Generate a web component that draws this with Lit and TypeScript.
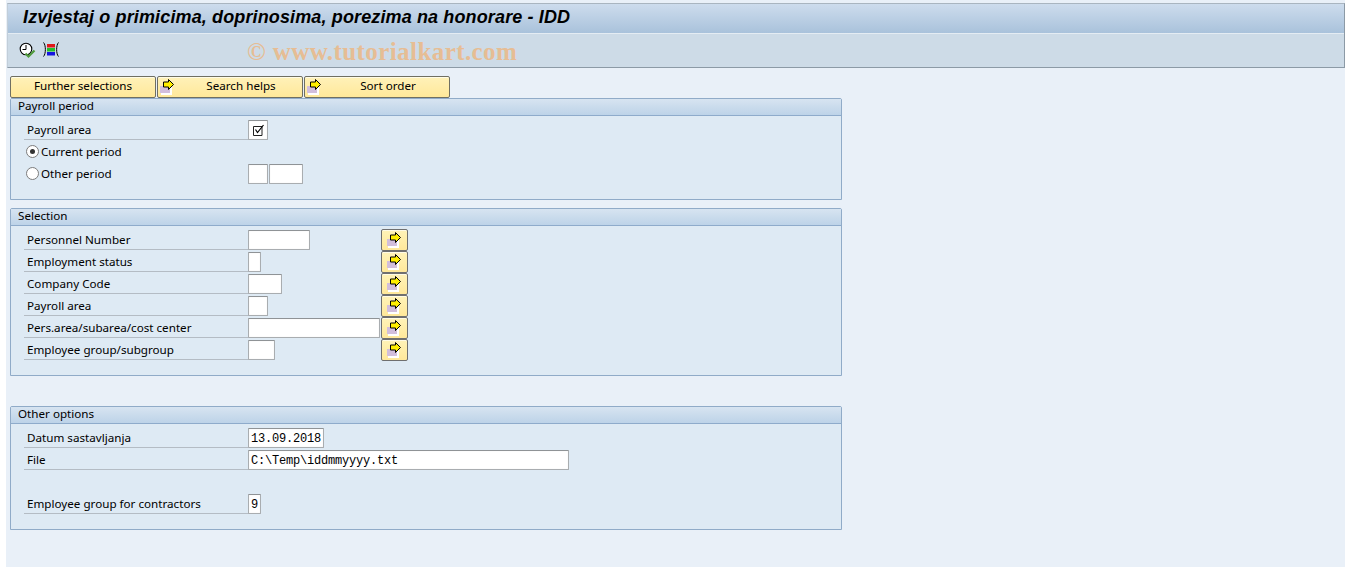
import { LitElement, html, css, svg } from "lit";
import { customElement } from "lit/decorators.js";

const arrowIcon = svg`<svg class="ai" width="18" height="18" viewBox="0 0 18 18">
  <rect x="3" y="8" width="11" height="8" fill="#fff"/>
  <rect x="2" y="7" width="10" height="7" fill="#d2bedc"/>
  <path d="M5.5 3H10.5V0.5L15.5 5.5L10.5 10.5V8H5.5Z" fill="#ffee00" stroke="#000" stroke-width="1"/>
</svg>`;

interface Row { label?: string; w?: number; val?: string; sel?: boolean; }

@customElement("app-root")
export class AppRoot extends LitElement {
  static styles = css`
    :host { display: block; width: 1355px; height: 567px; background: #fff; overflow: hidden;
      font-family: "Noto Sans", "Liberation Sans", Arial, sans-serif; font-size: 11.65px; color: #000; }
    .page { margin: 0 10px 0 6px; height: 567px; background: #e9f0f8; padding-top: 3px; box-sizing: border-box; }
    .head { margin-left: 1px; height: 65px; box-sizing: border-box; border: 1px solid #8c9aa6; border-top-color: #a9b5c0; border-left-color: #c2ced9; display: flex; flex-direction: column; }
    .title { height: 30px; box-sizing: border-box; border-bottom: 1px solid #e4ecf3; background: linear-gradient(#cddced, #a9c2db); padding: 3px 0 0 15px;
      font: italic bold 18px "Liberation Sans", Arial, sans-serif; line-height: 20px; white-space: nowrap; letter-spacing: .13px; }
    .tools { flex: 1; background: #cddbe7; display: flex; align-items: center; padding-left: 11px; gap: 7px; position: relative; padding-bottom: 1px; }
    .wm { position: absolute; left: 239px; top: 4px; font: bold 25px "Liberation Serif", serif; line-height: 28px; color: #e6bd94; white-space: nowrap; letter-spacing: .42px; }
    .tabs { display: flex; gap: 1px; margin: 8px 0 0 4px; }
    .btn { box-sizing: border-box; width: 146px; height: 22px; border: 1px solid #6f6f62; border-radius: 2px; background: linear-gradient(#fff3b8 0, #fff0b4 15%, #ffe89a 100%);
      box-shadow: inset 0 1px 0 #fffbe6; position: relative; text-align: center; line-height: 18px; }
    .btn.ic { padding-left: 22px; }
    .btn .ai { position: absolute; left: 0; top: 2px; }
    .sec { margin-left: 4px; width: 832px; box-sizing: border-box; border: 1px solid #90abc8; background: #deeaf4; border-radius: 2px 2px 0 0; }
    .sec + .sec { margin-top: 8px; }
    .sec.far { margin-top: 30px; }
    .sh { height: 17px; box-sizing: border-box; background: linear-gradient(#d7e4f1, #bdd3e8); border-bottom: 1px solid #8eabcb; padding-left: 7px; line-height: 14px; }
    .rows { display: flex; flex-direction: column; padding: 4px 0 0 13px; }
    .row { height: 22px; display: flex; align-items: flex-start; position: relative; }
    .lab { width: 224px; height: 20px; box-sizing: border-box; border-bottom: 1px solid #b4bcc4; padding: 1px 0 0 3px; line-height: 17px; white-space: nowrap; flex: none; }
    .plain { display: flex; align-items: flex-start; height: 20px; padding-left: 2px; gap: 2px; width: 224px; box-sizing: border-box; flex: none; }
    .plain span { line-height: 17px; padding-top: 1px; }
    .radio { width: 13px; height: 13px; box-sizing: border-box; border: 1px solid #7c7c7c; border-radius: 50%; background: #fff; display: flex; align-items: center; justify-content: center; margin-top: 3px; }
    .radio i { width: 5px; height: 5px; background: #333; border-radius: 50%; display: block; }
    .inp { box-sizing: border-box; height: 20px; border: 1px solid #a9adb0; border-top-color: #8f9396; background: #fff; box-shadow: inset 0 0 1px #ddd; flex: none; border-radius: 1px;
      font: 12px "Liberation Mono", monospace; letter-spacing: -.2px; line-height: 20px; padding-left: 2px; white-space: nowrap; overflow: hidden; }
    .gap { width: 1px; flex: none; }
    .chk { display: flex; align-items: center; justify-content: center; padding: 0; }
    .pick { position: absolute; left: 357px; top: -1px; box-sizing: border-box; width: 27px; height: 22px; border: 1px solid #6f6f6f; border-radius: 2px; background: linear-gradient(#fff3b8, #ffe89a); box-shadow: inset 0 1px 0 #fffbe6; }
    .pick .ai { position: absolute; left: 3px; top: 2px; }
  `;

  private sect(title: string, h: number, body: unknown, cls = "") {
    return html`<div class="sec ${cls}" style="height:${h}px"><div class="sh">${title}</div><div class="rows">${body}</div></div>`;
  }

  private input(r: Row) {
    return html`<div class="inp" style="width:${r.w}px">${r.val ?? ""}</div>`;
  }

  render() {
    const sel: Row[] = [
      { label: "Personnel Number", w: 62 },
      { label: "Employment status", w: 13 },
      { label: "Company Code", w: 34 },
      { label: "Payroll area", w: 20 },
      { label: "Pers.area/subarea/cost center", w: 132 },
      { label: "Employee group/subgroup", w: 27 },
    ];
    return html`<div class="page">
      <div class="head">
        <div class="title">Izvjestaj o primicima, doprinosima, porezima na honorare - IDD</div>
        <div class="tools">
          <svg width="17" height="17" viewBox="0 0 17 17">
            <circle cx="7" cy="7" r="5.8" fill="#fff" stroke="#000" stroke-width="1.1"/>
            <path d="M7 3V7.5H3.5" fill="none" stroke="#000"/>
            <path d="M6.5 11.5L9.5 14.5L15.5 8.5" fill="none" stroke="#4f9a3c" stroke-width="2.2"/>
          </svg>
          <svg width="16" height="16" viewBox="0 0 16 16">
            <path d="M0.5 0.5C3 3 3 12 0.5 14.5M15.5 0.5C13 3 13 12 15.5 14.5" fill="none" stroke="#000"/>
            <rect x="4" y="2" width="8" height="3.5" fill="#e01818"/>
            <rect x="4" y="6" width="8" height="3.5" fill="#22c02a"/>
            <rect x="4" y="10" width="8" height="3.5" fill="#1414e0"/>
          </svg>
          <div class="wm">© www.tutorialkart.com</div>
        </div>
      </div>
      <div class="tabs">
        <div class="btn">Further selections</div>
        <div class="btn ic">${arrowIcon}Search helps</div>
        <div class="btn ic">${arrowIcon}Sort order</div>
      </div>
      ${this.sect("Payroll period", 102, html`
        <div class="row"><div class="lab">Payroll area</div>
          <div class="inp chk" style="width:20px"><svg width="14" height="14" viewBox="0 0 14 14"><path d="M2.5 3.5H11V12.5H2.5Z" fill="none" stroke="#222"/><path d="M4.5 6.5L6.5 9.5L12.5 2" fill="none" stroke="#000" stroke-width="1.2"/></svg></div></div>
        <div class="row"><div class="plain"><div class="radio"><i></i></div><span>Current period</span></div></div>
        <div class="row"><div class="plain"><div class="radio"></div><span>Other period</span></div>
          ${this.input({ w: 20 })}<div class="gap"></div>${this.input({ w: 34 })}</div>
      `)}
      ${this.sect("Selection", 168, html`
        ${sel.map((r) => html`<div class="row"><div class="lab">${r.label}</div>${this.input(r)}<div class="pick">${arrowIcon}</div></div>`)}
      `)}
      ${this.sect("Other options", 124, html`
        <div class="row"><div class="lab">Datum sastavljanja</div>${this.input({ w: 76, val: "13.09.2018" })}</div>
        <div class="row"><div class="lab">File</div>${this.input({ w: 321, val: "C:\\Temp\\iddmmyyyy.txt" })}</div>
        <div class="row"></div>
        <div class="row"><div class="lab">Employee group for contractors</div>${this.input({ w: 13, val: "9" })}</div>
      `, "far")}
    </div>`;
  }
}
